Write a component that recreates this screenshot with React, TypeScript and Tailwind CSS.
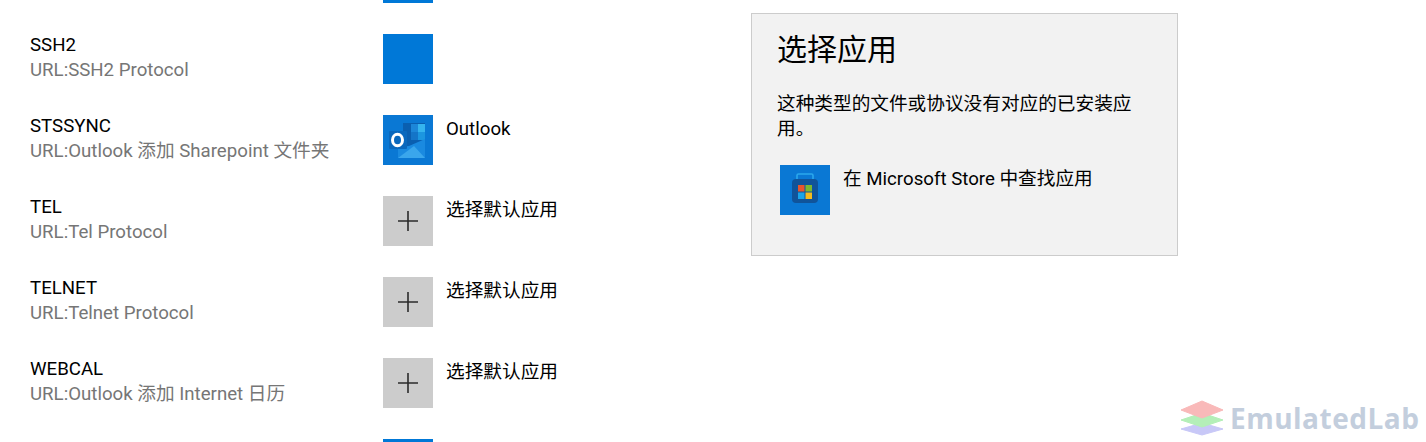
const font = { fontFamily: 'Roboto, "Noto Sans CJK SC", sans-serif' };

const rows = [
  { name: "", desc: "", app: "blank" },
  { name: "SSH2", desc: "URL:SSH2 Protocol", app: "blank" },
  { name: "STSSYNC", desc: "URL:Outlook 添加 Sharepoint 文件夹", app: "outlook" },
  { name: "TEL", desc: "URL:Tel Protocol", app: "add" },
  { name: "TELNET", desc: "URL:Telnet Protocol", app: "add" },
  { name: "WEBCAL", desc: "URL:Outlook 添加 Internet 日历", app: "add" },
  { name: "", desc: "", app: "blank" },
];

function OutlookIcon() {
  return (
    <svg viewBox="0 0 50 50" className="w-[50px] h-[50px]">
      <rect width="50" height="50" fill="#0a78d4" />
      <rect x="20" y="8" width="22" height="24" fill="#0a5fb0" />
      <rect x="28" y="9" width="7" height="8" fill="#1c86d8" />
      <rect x="35" y="9" width="7" height="8" fill="#35b4ee" />
      <rect x="28" y="17" width="7" height="8" fill="#1475c8" />
      <rect x="35" y="17" width="7" height="8" fill="#1c96e0" />
      <path d="M15 32 L26 31 L42 24 V43 H15 Z" fill="#1a8ae0" />
      <path d="M15 43 L31 31 L42 43 Z" fill="#3aa6ec" />
      <rect x="6" y="16" width="18" height="18" rx="1" fill="#0a68bd" />
      <ellipse cx="14.5" cy="25" rx="5" ry="5.8" fill="none" stroke="#fff" strokeWidth="3" />
    </svg>
  );
}

function StoreIcon() {
  return (
    <svg viewBox="0 0 50 50" className="w-[50px] h-[50px]">
      <rect width="50" height="50" fill="#0a78d4" />
      <path d="M17 15 V10.5 a1.5 1.5 0 0 1 1.5-1.5 H31.5 a1.5 1.5 0 0 1 1.5 1.5 V15" fill="none" stroke="#2ba8ec" strokeWidth="1.6" />
      <rect x="12" y="14" width="26" height="24" rx="4" fill="#10549a" />
      <rect x="18" y="20" width="6.5" height="6.5" fill="#e8552c" />
      <rect x="25.5" y="20" width="6.5" height="6.5" fill="#7cb82f" />
      <rect x="18" y="27.5" width="6.5" height="6.5" fill="#19a4e8" />
      <rect x="25.5" y="27.5" width="6.5" height="6.5" fill="#f5bb1e" />
    </svg>
  );
}

function AppTile({ app }: { app: string }) {
  if (app === "outlook") {
    return <OutlookIcon />;
  }
  if (app === "add") {
    return (
      <div className="w-[50px] h-[50px] bg-[#cccccc] flex items-center justify-center">
        <svg viewBox="0 0 20 20" className="w-5 h-5">
          <path d="M10 0 V20 M0 10 H20" stroke="#2b2b2b" strokeWidth="1.6" />
        </svg>
      </div>
    );
  }
  return <div className="w-[50px] h-[50px] bg-[#0078d7]" />;
}

export default function App() {
  return (
    <div className="relative w-[1426px] h-[442px] overflow-hidden bg-white" style={font}>
      <div className="flex flex-col gap-[31px] -mt-[47px] pl-[30px]">
        {rows.map((row, i) => (
          <div key={i} className="flex h-[50px]">
            <div className="w-[353px] -mt-px text-[18.67px] leading-[24px]">
              <div className="text-black">{row.name}</div>
              <div className="mt-px text-[#767676]">{row.desc}</div>
            </div>
            <AppTile app={row.app} />
            <div className="ml-[13px] text-[18.67px] leading-[24px] pt-[2px] text-black">
              {row.app === "outlook" ? "Outlook" : row.app === "add" ? "选择默认应用" : ""}
            </div>
          </div>
        ))}
      </div>

      {/* flyout */}
      <div className="absolute left-[751px] top-[13px] w-[427px] h-[243px] bg-[#f2f2f2] border border-[#cccccc] pl-[25px] pt-[16px]">
        <div className="text-[30px] leading-[40px] text-black">选择应用</div>
        <div className="mt-[22px] w-[370px] text-[18.67px] leading-[25px] text-black">
          这种类型的文件或协议没有对应的已安装应用。
        </div>
        <div className="mt-[23px] ml-[3px] flex">
          <StoreIcon />
          <div className="ml-[13px] text-[18.67px] leading-[24px] pt-[2px] text-black">在 Microsoft Store 中查找应用</div>
        </div>
      </div>

      {/* watermark */}
      <div className="absolute left-[1179px] top-[399px] flex items-center gap-[5px]">
        <svg viewBox="0 0 46 37" className="w-[46px] h-[37px]">
          <path d="M23 24 L44 30 L23 36 L2 30 Z" fill="#c8c8f7" stroke="#c8c8f7" strokeLinejoin="round" />
          <path d="M23 14 L44 21 L23 28 L2 21 Z" fill="#b4efb8" stroke="#b4efb8" strokeLinejoin="round" />
          <path d="M23 2 L44 11 L23 19 L2 11 Z" fill="#f9b9b9" stroke="#f9b9b9" strokeLinejoin="round" />
        </svg>
        <span className="text-[28px] font-bold leading-[36px] text-[#c3cedd] tracking-[0.5px]" style={{ fontFamily: '"Open Sans", sans-serif' }}>EmulatedLab</span>
      </div>
    </div>
  );
}
